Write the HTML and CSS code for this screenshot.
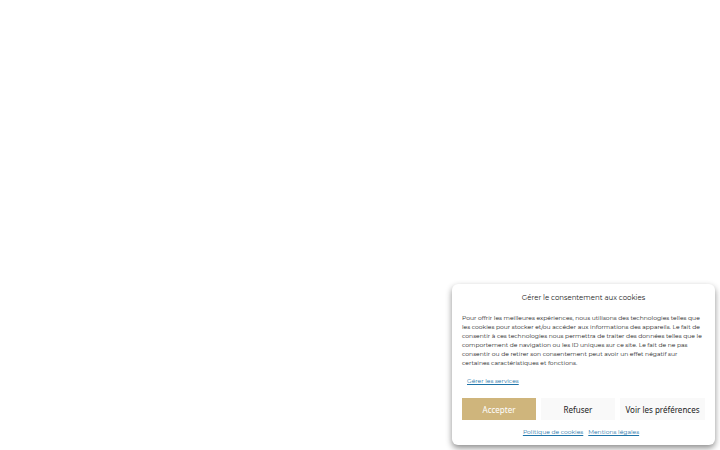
FILE: index.html
```html
<!DOCTYPE html>
<html lang="fr">
<head>
<meta charset="utf-8">
<meta name="viewport" content="width=device-width, initial-scale=1">
<title>Consentement aux cookies</title>
<link rel="stylesheet" href="styles.css">
</head>
<body>
<section class="banner" role="dialog" aria-labelledby="banner-title">
  <h2 class="title" id="banner-title">Gérer le consentement aux cookies</h2>
  <p class="message">Pour offrir les meilleures expériences, nous utilisons des technologies telles que<br>
les cookies pour stocker et/ou accéder aux informations des appareils. Le fait de<br>
consentir à ces technologies nous permettra de traiter des données telles que le<br>
comportement de navigation ou les ID uniques sur ce site. Le fait de ne pas<br>
consentir ou de retirer son consentement peut avoir un effet négatif sur<br>
certaines caractéristiques et fonctions.</p>
  <div class="services"><a href="#services">Gérer les services</a></div>
  <div class="buttons">
    <button class="button accept" type="button">Accepter</button>
    <button class="button" type="button">Refuser</button>
    <button class="button preferences" type="button">Voir les préférences</button>
  </div>
  <nav class="links">
    <a href="#cookies">Politique de cookies</a>
    <a href="#mentions">Mentions légales</a>
  </nav>
</section>
</body>
</html>
```
FILE: styles.css
```css
* { box-sizing: border-box; }

body {
  margin: 0;
  min-height: 100vh;
  padding: 5px;
  display: flex;
  justify-content: flex-end;
  align-items: flex-end;
  background: #fff;
  color: #222;
  font-family: Montserrat, "Open Sans", sans-serif;
  font-size: 6px;
  line-height: 9px;
}

.banner {
  width: 263px;
  max-width: 100%;
  padding: 8px 10px;
  display: grid;
  border-radius: 6px;
  background: #fff;
  box-shadow: 0 3px 6px rgba(0, 0, 0, 0.45);
}

.title {
  margin: 0 0 11px;
  font-size: 7px;
  font-weight: 400;
  line-height: 11px;
  text-align: center;
}

.message { margin: 0; white-space: nowrap; }

.services { margin: 9px 5px 12px; }

a { color: #1e73a8; }

.buttons {
  display: grid;
  grid-template-columns: 1fr 1fr 85px;
  gap: 5px;
}

.button {
  height: 22px;
  padding: 0;
  border: 1px solid #f9f9f9;
  border-radius: 0;
  background: #f9f9f9;
  color: #222;
  font-family: "Noto Sans", "DejaVu Sans", sans-serif;
  font-size: 8px;
  white-space: nowrap;
}

.accept { border-color: #cfb57c; background: #cfb57c; color: #fff; }

.links {
  margin-top: 8px;
  padding-right: 5px;
  display: flex;
  justify-content: center;
  gap: 5px;
}
```
